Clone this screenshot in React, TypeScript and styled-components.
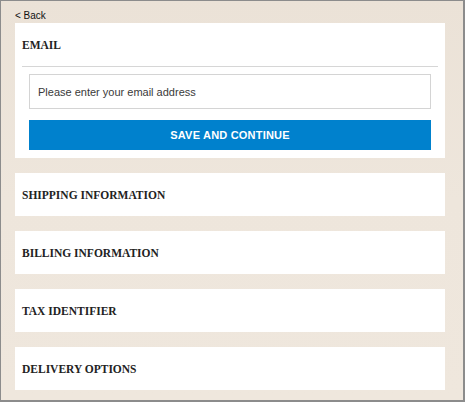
import React from 'react';
import styled, { createGlobalStyle } from 'styled-components';

const Global = createGlobalStyle`
  html, body {
    margin: 0;
    padding: 0;
  }
  * { box-sizing: border-box; }
`

const Frame = styled.div`
  width: 465px;
  height: 402px;
  border-style: solid;
  border-color: #8c8c8c;
  border-width: 1px 2px 2px 1px;
  background: linear-gradient(180deg, #ebe2d7 0%, #eee6dc 50%, #efe7dd 100%);
  padding: 9px 19px 0 14px;
  display: flex;
  flex-direction: column;
`

const Back = styled.a`
  font-family: "Liberation Sans", Arial, sans-serif;
  font-size: 10px;
  line-height: 12px;
  color: #111;
  text-decoration: none;
  margin-bottom: 1px;
  cursor: pointer;
`

const Steps = styled.div`
  display: flex;
  flex-direction: column;
  gap: 15px;
`

const Card = styled.section`
  background: #ffffff;
  width: 430px;
`

const Title = styled.h2<{ $divider?: boolean }>`
  margin: 0 7px;
  height: ${p => (p.$divider ? '44px' : '43px')};
  display: flex;
  align-items: center;
  font-family: "Liberation Serif", "Times New Roman", serif;
  font-weight: bold;
  font-size: 11.5px;
  color: #222;
  border-bottom: ${p => (p.$divider ? '1px solid #d6d6d6' : 'none')};
`

const Body = styled.div`
  padding: 7px 14px 8px;
  display: flex;
  flex-direction: column;
  gap: 11px;
`

const Input = styled.input`
  height: 35px;
  width: 100%;
  border: 1px solid #d4d4d4;
  padding: 0 8px;
  font-family: "Liberation Sans", Arial, sans-serif;
  font-size: 11px;
  color: #333;
  outline: none;
  &::placeholder { color: #3a3a3a; }
`

const Button = styled.button`
  height: 30px;
  width: 100%;
  border: none;
  background: #0081cd;
  color: #fff;
  font-family: "Liberation Sans", Arial, sans-serif;
  font-weight: bold;
  font-size: 11px;
  letter-spacing: 0.2px;
  cursor: pointer;
`

const steps = ['SHIPPING INFORMATION', 'BILLING INFORMATION', 'TAX IDENTIFIER', 'DELIVERY OPTIONS']

export default function App() {
  return (
    <Frame>
      <Global />
      <Back>&lt; Back</Back>
      <Steps>
        <Card>
          <Title $divider>EMAIL</Title>
          <Body>
            <Input type="email" placeholder="Please enter your email address" />
            <Button>SAVE AND CONTINUE</Button>
          </Body>
        </Card>
        {steps.map(s => (
          <Card key={s}>
            <Title>{s}</Title>
          </Card>
        ))}
      </Steps>
    </Frame>
  )
}
